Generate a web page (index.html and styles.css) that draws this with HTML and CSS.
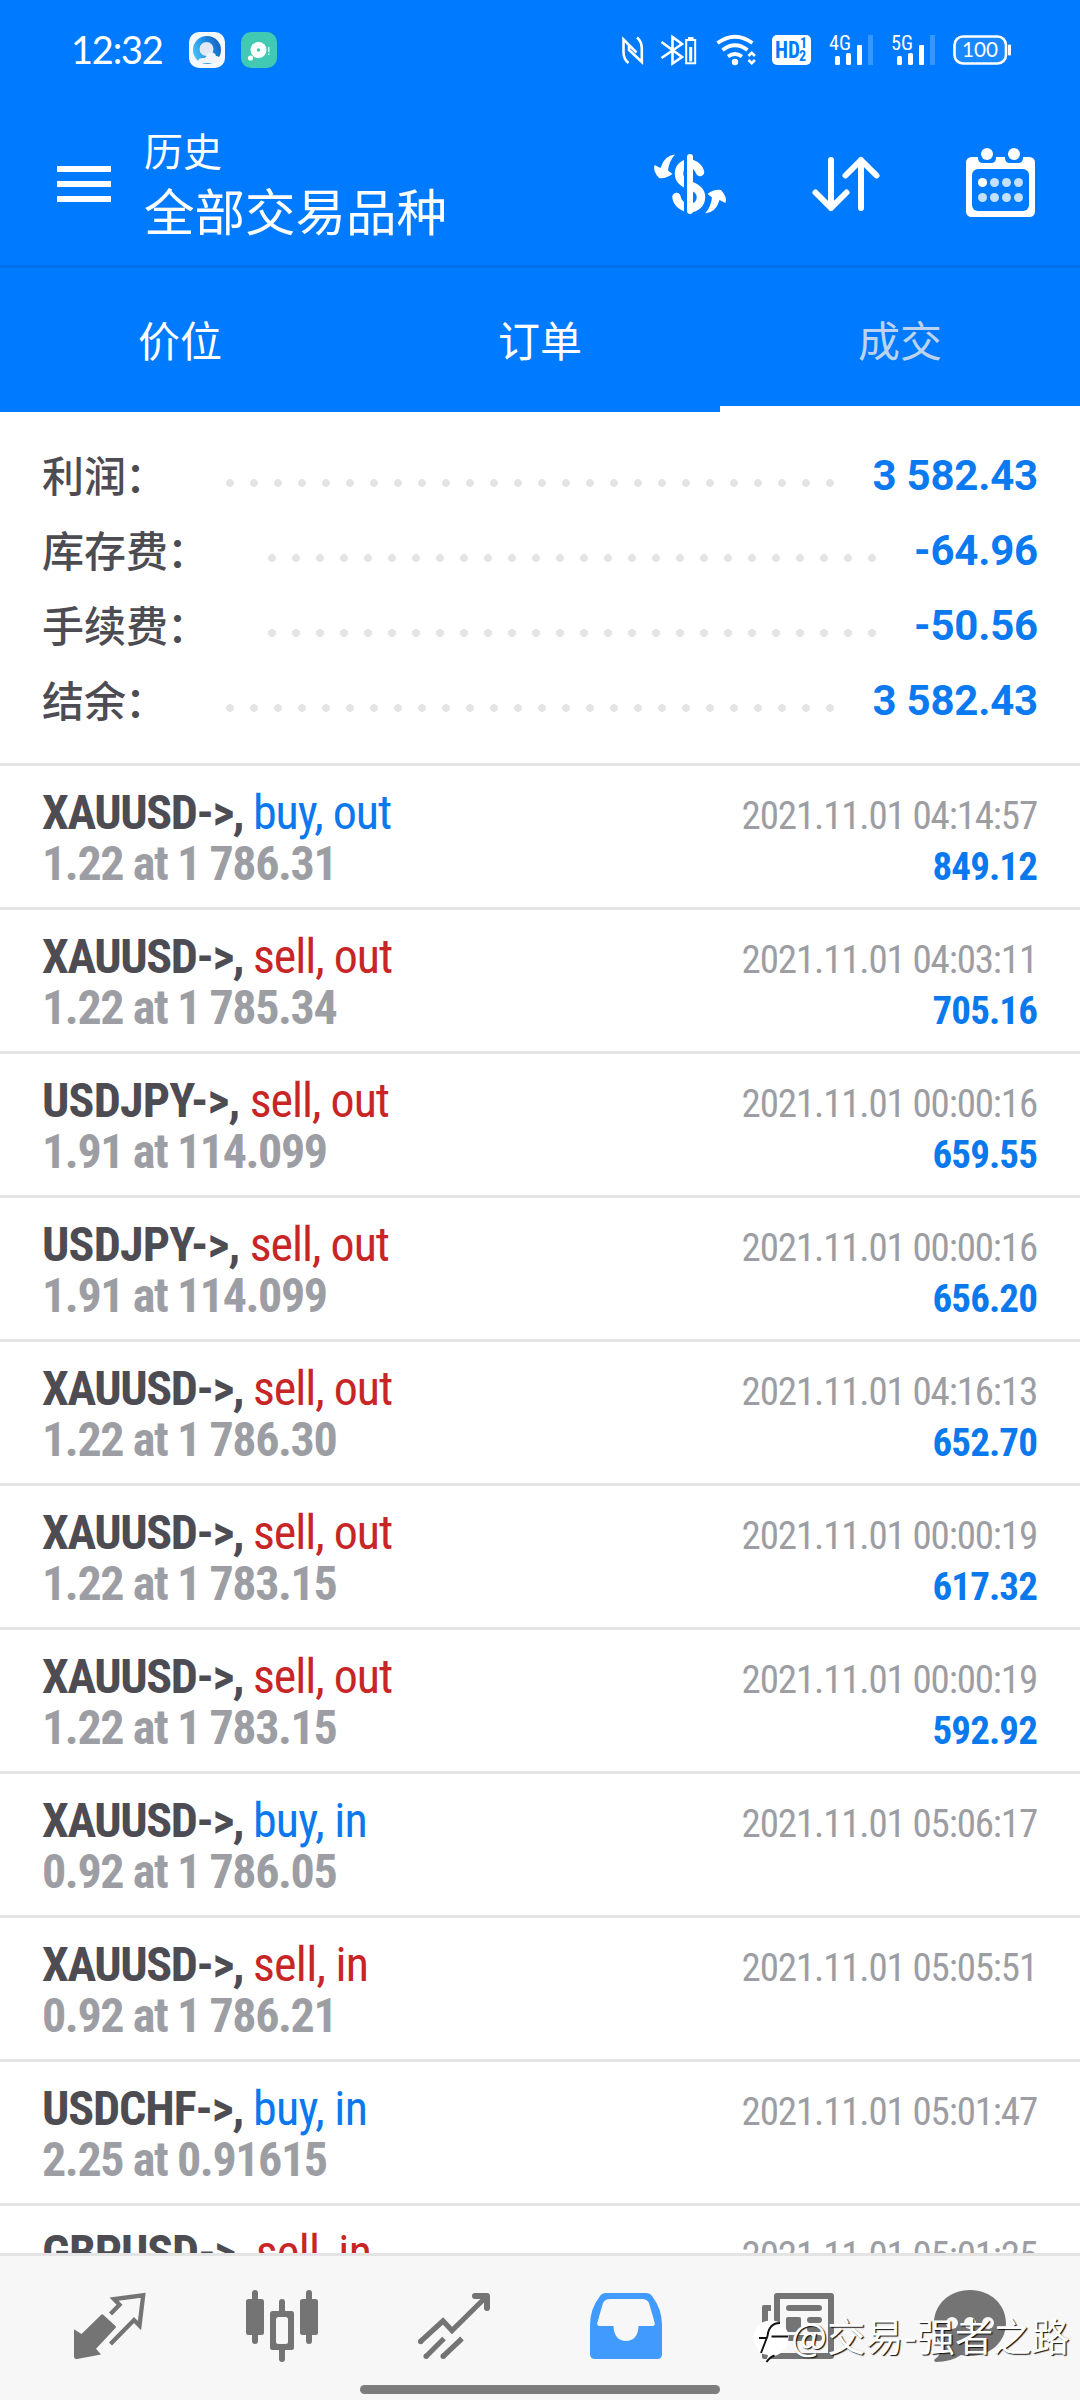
FILE: index.html
```html
<!DOCTYPE html>
<html lang="zh-CN">
<head>
<meta charset="utf-8">
<title>历史</title>
<link rel="stylesheet" href="styles.css">
</head>
<body>
<div class="screen">
  <header class="header">
    <div class="status">
      <span class="clock">12:32</span>
      <svg class="app-icon" viewBox="0 0 36 36">
        <defs>
          <linearGradient id="ring" x1="0" y1="0.7" x2="1" y2="0.3"><stop offset="0" stop-color="#4cc4f5"/><stop offset="0.5" stop-color="#1d90e4"/><stop offset="1" stop-color="#1560c4"/></linearGradient>
        </defs>
        <rect width="36" height="36" rx="10" fill="#f4f9fd"/>
        <circle cx="18" cy="18" r="14" fill="url(#ring)"/>
        <circle cx="17.500" cy="17" r="7" fill="#e3e9f2"/>
        <path d="M12 31c-4 0-4-5 2-5 1 0 2 0 3-1 1-6 9-6 10-1 5 0 6 7 1 7z" fill="#f1f3f9"/>
      </svg>
      <svg class="app-icon second" viewBox="0 0 36 36">
        <rect width="36" height="36" rx="10" fill="#42c9b3"/>
        <circle cx="17.500" cy="18" r="8" fill="#fff"/>
        <circle cx="17.500" cy="18" r="1.700" fill="#42c9b3"/>
        <circle cx="9.500" cy="26" r="2.600" fill="#fff"/>
        <path d="M27.800 15v5M27.800 21.500v1.500" stroke="#c9f3ec" stroke-width="1.600"/>
      </svg>
      <svg class="status-icons" viewBox="620 32 394 36">
        <g fill="none" stroke="#fff" stroke-width="2.600">
          <path d="M628.500 63q-5-4-5-11V39.500L636.500 52.500M637 37.500q4.800 4 4.800 11V62L629 50v-4"/>
          <path d="M661.500 42l20.500 15-9.500 6.500V37L682 44l-20.500 14"/>
          <rect x="686.200" y="40" width="9" height="23.300" stroke-width="2"/><path d="M688 38.300h5.500"/><path d="M690.700 47v14.500" stroke-width="3"/>
          <path d="M717.500 43q17.500-12.500 35 0" stroke-width="3.800"/><path d="M722.500 50q12.500-9.500 25 0" stroke-width="3.800"/><path d="M728 56.500q7-5 14 0" stroke-width="3.800"/>
          <path d="M748.500 56l3.200-3.200 3.200 3.200M748.500 60l3.200 3.200 3.200-3.200"/>
          <rect x="954.500" y="36.500" width="51.500" height="27" rx="8.500" fill="#1a88ff"/>
        </g>
        <g fill="#fff">
          <circle cx="735" cy="62" r="3.200"/>
          <rect x="772" y="35" width="39" height="30" rx="5"/>
          <rect x="835" y="56" width="5" height="9" rx="1.500"/><rect x="846" y="53" width="5" height="12" rx="1.500"/><rect x="857" y="45" width="5" height="20" rx="1"/>
          <rect x="897" y="56" width="5" height="9" rx="1.500"/><rect x="908" y="53" width="5" height="12" rx="1.500"/><rect x="919" y="45" width="5" height="20" rx="1"/>
          <rect x="1008" y="44.500" width="3" height="11" rx="1"/>
          <g opacity=".22"><rect x="868" y="35" width="5" height="30"/><rect x="930" y="35" width="5" height="30"/></g>
        </g>
        <g class="status-text">
          <text x="829" y="50.300" font-size="20" textLength="22" lengthAdjust="spacingAndGlyphs">4G</text>
          <text x="891" y="50.300" font-size="20" textLength="22" lengthAdjust="spacingAndGlyphs">5G</text>
          <text class="battery" x="962" y="57" font-size="20.500" textLength="36" lengthAdjust="spacingAndGlyphs">100</text>
          <text class="hd" x="775" y="58" font-size="23" textLength="25" lengthAdjust="spacingAndGlyphs">HD</text>
          <text class="hd" x="800" y="48" font-size="14">1</text>
          <text class="hd" x="799" y="61" font-size="14">2</text>
        </g>
      </svg>
    </div>
    <div class="appbar">
      <div class="menu"><i></i><i></i><i></i></div>
      <div class="titles"><div class="title-small">历史</div><div class="title-big">全部交易品种</div></div>
      <svg class="actions" viewBox="640 140 400 90">
        <path d="M700 172C698 166 693 163.500 689 163.500C683 163.500 679 168 679 173.500C679 180 684 183.500 690 185.500C697 188 701 191 701 197C701 203.500 696 208 690 208C683 208 677 203 676.500 197" fill="none" stroke="#fff" stroke-width="8.500" stroke-linecap="round"/>
        <path d="M685.500 152v64" stroke="#007aff" stroke-width="3"/>
        <path d="M690 157v54" stroke="#fff" stroke-width="6" stroke-linecap="round"/>
        <path d="M675 154.500Q664 155.500 660.500 168L654.500 165Q652.500 171 659 178Q666 179 672.500 174L668 170.500Q669 161 675 154.500zM705 213.500Q716 212.500 719.500 200L725.500 203Q727.500 197 721 190Q714 189 707.500 194L712 197.500Q711 207 705 213.500z" fill="#fff"/>
        <path d="M831 160v48M815.500 192.500L831 208L846.500 192.500M861 208v-48M845.500 175.500L861 160L876.500 175.500" fill="none" stroke="#fff" stroke-width="6" stroke-linecap="round" stroke-linejoin="round"/>
        <rect x="966" y="157" width="69" height="60" rx="5.500" fill="#fff"/>
        <path d="M978 156v2q0 5 5 5h8q5 0 5-5v-2zM1005 156v2q0 5 5 5h8q5 0 5-5v-2z" fill="#007aff"/>
        <rect x="972" y="169" width="57" height="42" rx="6" fill="#007aff"/>
        <g fill="#fff"><circle cx="987" cy="154" r="6"/><circle cx="1014" cy="154" r="6"/><circle cx="982.500" cy="182.500" r="4.600"/></g>
        <g fill="#c4e0ff"><circle cx="994.500" cy="182.500" r="4.500"/><circle cx="1006.500" cy="182.500" r="4.500"/><circle cx="1018.500" cy="182.500" r="4.500"/><circle cx="982.500" cy="197.500" r="4.500"/><circle cx="994.500" cy="197.500" r="4.500"/><circle cx="1006.500" cy="197.500" r="4.500"/><circle cx="1018.500" cy="197.500" r="4.500"/></g>
      </svg>
    </div>
    <nav class="tabs"><span class="tab">价位</span><span class="tab">订单</span><span class="tab active">成交</span></nav>
  </header>

  <section class="summary">
    <div class="sum-row"><span class="label">利润<span class="colon">：</span></span><span class="dots"></span><span class="sum">3 582.43</span></div>
    <div class="sum-row"><span class="label">库存费<span class="colon">：</span></span><span class="dots"></span><span class="sum">-64.96</span></div>
    <div class="sum-row"><span class="label">手续费<span class="colon">：</span></span><span class="dots"></span><span class="sum">-50.56</span></div>
    <div class="sum-row"><span class="label">结余<span class="colon">：</span></span><span class="dots"></span><span class="sum">3 582.43</span></div>
  </section>

  <main class="deals">
    <article class="deal"><div><div class="name">XAUUSD-&gt;, <span class="buy">buy, out</span></div><div class="volume">1.22 at 1 786.31</div></div><div class="right"><div class="time">2021.11.01 04:14:57</div><div class="profit">849.12</div></div></article>
    <article class="deal"><div><div class="name">XAUUSD-&gt;, <span class="sell">sell, out</span></div><div class="volume">1.22 at 1 785.34</div></div><div class="right"><div class="time">2021.11.01 04:03:11</div><div class="profit">705.16</div></div></article>
    <article class="deal"><div><div class="name usdjpy">USDJPY-&gt;, <span class="sell">sell, out</span></div><div class="volume">1.91 at 114.099</div></div><div class="right"><div class="time">2021.11.01 00:00:16</div><div class="profit">659.55</div></div></article>
    <article class="deal"><div><div class="name usdjpy">USDJPY-&gt;, <span class="sell">sell, out</span></div><div class="volume">1.91 at 114.099</div></div><div class="right"><div class="time">2021.11.01 00:00:16</div><div class="profit">656.20</div></div></article>
    <article class="deal"><div><div class="name">XAUUSD-&gt;, <span class="sell">sell, out</span></div><div class="volume">1.22 at 1 786.30</div></div><div class="right"><div class="time">2021.11.01 04:16:13</div><div class="profit">652.70</div></div></article>
    <article class="deal"><div><div class="name">XAUUSD-&gt;, <span class="sell">sell, out</span></div><div class="volume">1.22 at 1 783.15</div></div><div class="right"><div class="time">2021.11.01 00:00:19</div><div class="profit">617.32</div></div></article>
    <article class="deal"><div><div class="name">XAUUSD-&gt;, <span class="sell">sell, out</span></div><div class="volume">1.22 at 1 783.15</div></div><div class="right"><div class="time">2021.11.01 00:00:19</div><div class="profit">592.92</div></div></article>
    <article class="deal"><div><div class="name">XAUUSD-&gt;, <span class="buy in">buy, in</span></div><div class="volume">0.92 at 1 786.05</div></div><div class="right"><div class="time">2021.11.01 05:06:17</div></div></article>
    <article class="deal"><div><div class="name">XAUUSD-&gt;, <span class="sell in">sell, in</span></div><div class="volume">0.92 at 1 786.21</div></div><div class="right"><div class="time">2021.11.01 05:05:51</div></div></article>
    <article class="deal"><div><div class="name usdchf">USDCHF-&gt;, <span class="buy in">buy, in</span></div><div class="volume">2.25 at 0.91615</div></div><div class="right"><div class="time">2021.11.01 05:01:47</div></div></article>
    <article class="deal"><div><div class="name usdchf">GBPUSD-&gt;, <span class="sell in">sell, in</span></div></div><div class="right"><div class="time">2021.11.01 05:01:25</div></div></article>
  </main>

  <footer class="bottom">
    <svg class="nav-icon" viewBox="24 2256 172 144">
      <path d="M74 2329.300L81.500 2334L101 2315Q102 2313.500 103.500 2315L115.500 2326Q116.500 2327 115.500 2328L96 2348.700L101 2354.500L77 2359Q74 2359.300 74 2356.500z" fill="#747474"/>
      <path d="M110.500 2344L134 2320L139.500 2325.500L143.200 2295.300L114 2299L119.500 2304.800L110.500 2314" fill="none" stroke="#747474" stroke-width="4.300"/>
    </svg>
    <svg class="nav-icon" viewBox="196 2256 172 144">
      <g fill="#747474"><rect x="252" y="2290" width="6" height="54" rx="3"/><rect x="246" y="2299" width="18" height="36" rx="2.500"/><rect x="306" y="2290" width="6" height="54" rx="3"/><rect x="300" y="2299" width="18" height="36" rx="2.500"/><rect x="279" y="2299" width="6" height="63" rx="3"/><rect x="270" y="2311" width="24" height="39" rx="2.500"/></g>
      <rect x="276" y="2317" width="12" height="27" rx="2.500" fill="#f7f7f7"/>
    </svg>
    <svg class="nav-icon" viewBox="368 2256 172 144">
      <g fill="none" stroke="#747474" stroke-width="5.200"><path d="M420.500 2341.500L443 2321L452 2330.500L486 2297"/><path d="M475 2296h12v12" stroke-width="6" stroke-linecap="round" stroke-linejoin="round"/><path d="M426 2356.500L444 2338.500M443 2356.500L462 2338.500"/></g>
      <g fill="#747474"><circle cx="420.700" cy="2341.500" r="2.700"/><circle cx="426.200" cy="2356.300" r="2.700"/><circle cx="443.200" cy="2356.300" r="2.700"/></g>
    </svg>
    <svg class="nav-icon" viewBox="540 2256 172 144">
      <path fill-rule="evenodd" fill="#419bff" d="M606 2293H646Q650 2293 652 2296Q662 2309 662 2325V2354Q662 2359 657 2359H595Q590 2359 590 2354V2325Q590 2309 600 2296Q602 2293 606 2293zM610 2299Q605 2299 603 2303L597.500 2322Q596.500 2326 599.500 2326H613.500C613.500 2336 619 2341 626 2341C633 2341 638.500 2336 638.500 2326H652.500Q655.500 2326 654.500 2322L649 2303Q647 2299 642 2299z"/>
    </svg>
    <svg class="nav-icon" viewBox="712 2256 172 144">
      <path d="M771 2305h-7q-2 0-2 2v50q0 2 2 2h14v-6h-10v-42h3z" fill="#747474"/>
      <rect x="777" y="2296" width="54" height="60" fill="none" stroke="#747474" stroke-width="6" stroke-linejoin="round"/>
      <g stroke="#747474" stroke-width="6" stroke-linecap="round"><path d="M789 2308h30M810 2320h9M810 2329h9M789 2338h30"/></g><rect x="786" y="2317" width="15" height="15" rx="2" fill="#747474"/>
    </svg>
    <svg class="nav-icon" viewBox="884 2256 172 144">
      <path d="M970 2290C991 2290 1006 2305 1006 2323C1006 2342 990 2356 970 2356Q965 2356 961 2355Q951 2362 936 2362Q933 2361 935 2359Q941 2355 943 2345Q934 2337 934 2323C934 2305 949 2290 970 2290z" fill="#747474"/>
      <g fill="#f7f7f7"><circle cx="952" cy="2323" r="6"/><circle cx="970" cy="2323" r="6"/><circle cx="988" cy="2323" r="6"/></g>
    </svg>
    <div class="home-bar"></div>
    <div class="watermark">
      <svg class="mark" viewBox="752 2318 38 48">
        <path d="M771 2320.500C781 2320.500 788.500 2328 788.500 2337.500C788.500 2347 782 2354.500 774 2356L766 2362L768 2355L763 2354L758 2351L757 2347Q753 2343 753.500 2337C754 2328 761 2320.500 771 2320.500z" fill="#fff"/>
        <path d="M780 2323Q769 2323 767.500 2336L761 2353M759 2338h7M771.500 2336.500H788M766.500 2362Q770 2357 774.500 2355.500" fill="none" stroke="#111" stroke-width="1.900"/>
      </svg>
      <span class="handle">@交易-强者之路</span>
    </div>
  </footer>
</div>
</body>
</html>
```
FILE: styles.css
```css
* { box-sizing: border-box; }
body { margin: 0; background: #fff; font-family: Roboto, "Noto Sans CJK SC", sans-serif; }
svg { display: block; flex: none; }
.screen { width: 1080px; height: 2400px; display: flex; flex-direction: column; overflow: hidden; background: #fff; }

.header { height: 412px; flex: none; background: #007aff; color: #fff; }
.status { height: 100px; display: flex; align-items: center; padding-left: 71px; }
.clock { width: 118px; padding-bottom: 2px; font-family: Lato, sans-serif; font-size: 38px; letter-spacing: -1.2px; }
.app-icon { width: 36px; height: 36px; }
.second { margin-left: 16px; }
.status-icons { width: 394px; height: 36px; margin-left: 343px; }
.status-text { font-family: "Roboto Condensed", Roboto, sans-serif; fill: #fff; }
.battery { font-family: Lato, sans-serif; }
.hd { font-weight: 700; fill: #007aff; }

.appbar { height: 168px; display: flex; border-bottom: 3px solid #0071ed; }
.menu { width: 54px; margin: 66px 33px 0 57px; display: flex; flex-direction: column; gap: 9px; }
.menu i { height: 6px; background: #fff; }
.titles { width: 496px; padding-top: 24px; font-family: "Noto Sans CJK SC", sans-serif; }
.title-small { font-size: 39px; line-height: 50px; }
.title-big { font-size: 50.5px; line-height: 71px; }
.actions { width: 400px; height: 90px; margin-top: 40px; }

.tabs { height: 144px; display: flex; font: 42px/141px "Noto Sans CJK SC", sans-serif; }
.tab { flex: 1; text-align: center; }
.active { color: #bcd3ef; border-bottom: 6px solid #fff; }

.summary { height: 351px; flex: none; padding: 26px 42px 0; }
.sum-row { height: 75px; display: flex; align-items: center; justify-content: space-between; }
.label { width: 176px; height: 75px; color: #4d4c53; font: 500 42px/71px "Noto Sans CJK SC", sans-serif; }
.colon { margin-left: -1px; }
.sum-row:nth-child(2) .label, .sum-row:nth-child(3) .label { width: 218px; }
.dots { width: 624px; height: 24px; margin-top: 15px; background: radial-gradient(circle at center, #e4e4e4 3.5px, transparent 4.3px) 0 0 / 24px 24px repeat-x; }
.sum { flex: 1; text-align: right; color: #0b7af0; font-size: 42px; font-weight: 700; letter-spacing: -0.2px; white-space: nowrap; }

.deals { height: 1490px; flex: none; overflow: hidden; font-family: "Roboto Condensed", Roboto, sans-serif; }
.deal { height: 144px; border-top: 3px solid #e4e4e4; padding: 21px 42px 0; display: flex; justify-content: space-between; }
.name, .volume { font-size: 48px; line-height: 51px; font-weight: 700; letter-spacing: -1.4px; white-space: nowrap; }
.name { color: #4d4c53; }
.usdjpy { letter-spacing: -0.8px; }
.usdchf { letter-spacing: -1.1px; }
.name span { font-weight: 400; letter-spacing: -1px; }
.name .in { letter-spacing: -0.7px; }
.buy { color: #0b79ee; }
.sell { color: #c82626; }
.volume { color: #9d9ea4; }
.right { text-align: right; padding: 4px 1px 0 0; }
.time, .profit { font-size: 39px; line-height: 51px; }
.time { color: #9d9ea4; letter-spacing: -1.15px; }
.profit { color: #0b79ee; font-weight: 700; letter-spacing: -0.9px; }

.bottom { position: relative; height: 147px; flex: none; display: flex; padding: 0 24px; background: #f7f7f7; border-top: 3px solid #e4e4e4; }
.nav-icon { width: 172px; height: 144px; }
.home-bar { position: absolute; left: 360px; bottom: 6px; width: 360px; height: 9px; border-radius: 5px; background: #7d7d7d; }
.watermark { position: absolute; left: 752px; top: 62px; display: flex; color: #fff; font: 38.2px/33px "Noto Sans CJK SC", sans-serif; text-shadow: 1.3px 1.3px 1px #111; white-space: nowrap; }
.mark { width: 38px; height: 48px; }
.handle { margin-left: 1px; }
```
